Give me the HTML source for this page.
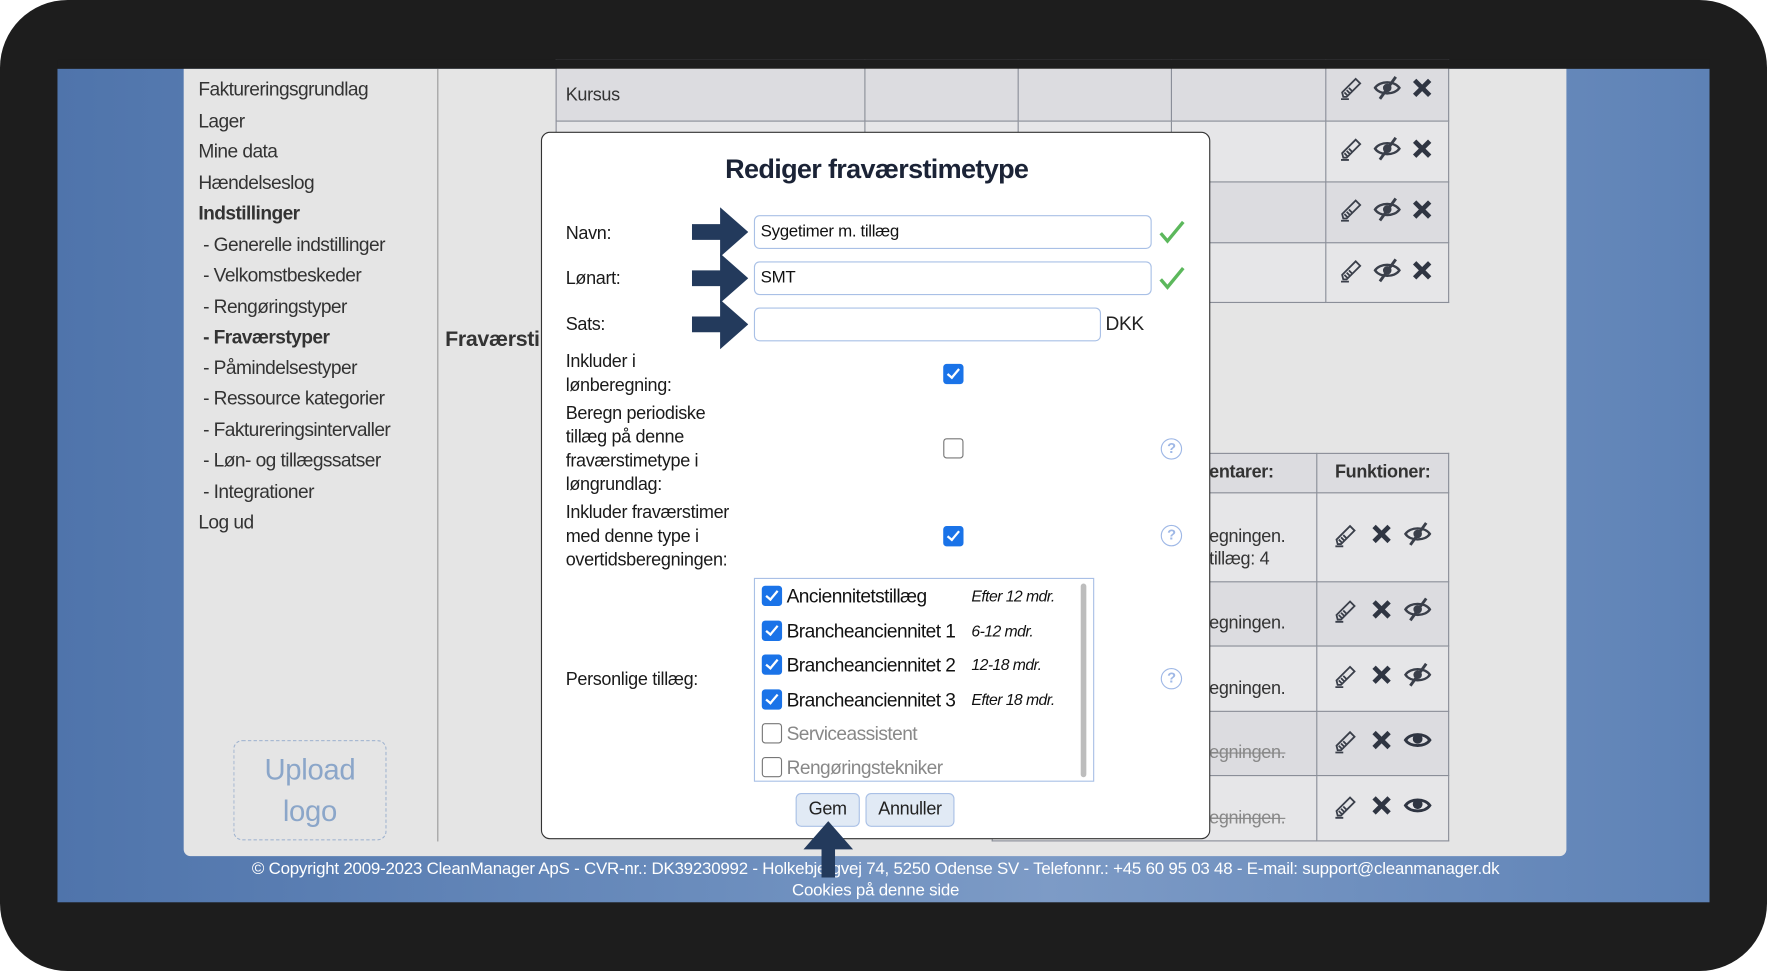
<!DOCTYPE html>
<html><head><meta charset="utf-8"><style>
*{margin:0;padding:0;box-sizing:border-box}
html,body{width:1767px;height:971px;overflow:hidden;background:#fff}
#w{position:absolute;left:0;top:0;width:1568px;height:862px;transform:scale(1.12691,1.12645);transform-origin:0 0;font-family:"Liberation Sans",sans-serif;color:#222;letter-spacing:-0.3px}
.a{position:absolute}
#frame{left:0;top:0;width:1568px;height:862px;background:#1d1d1d;border-radius:60px}
#bg{left:51px;top:61px;width:1466px;height:740px;background:linear-gradient(90deg,#4f74ab 0%,#6b8dbd 40%,#7d9bc6 60%,#5e82b6 100%)}
#cont{left:163px;top:61px;width:1227px;height:699px;background:#e5e5e5;border-radius:0 0 6px 6px}
#side{left:388px;top:61px;width:1px;height:686px;background:#9a9a9a}
.si{position:absolute;left:176px;font-size:17px;color:#333;letter-spacing:-0.5px}
.t td{border:1px solid #8a8e98;font-size:16px;color:#333;padding-left:8px}
table{border-collapse:collapse;position:absolute}
#modal{left:480px;top:117px;width:594px;height:628px;background:#fff;border:1.5px solid #333;border-radius:8px}
.lbl{position:absolute;left:21px;font-size:16px;line-height:21px;color:#1a1a1a}
.inp{position:absolute;left:188px;height:30px;border:1.5px solid #a9c0e6;border-radius:5px;font-size:15px;padding:5px 5px;color:#111}
.cb{position:absolute;width:18px;height:18px;border-radius:3px;background:#1a73e8}
.cb:after{content:"";position:absolute;left:6px;top:2px;width:4px;height:9px;border:solid #fff;border-width:0 2.5px 2.5px 0;transform:rotate(40deg)}
.cbo{position:absolute;width:18px;height:18px;border-radius:3px;border:1.5px solid #777;background:#fff}
.q{position:absolute;left:549px;width:19px;height:19px;border:1.5px solid #9fb8e6;border-radius:50%;color:#9fb8e6;font-size:13px;text-align:center;line-height:16px;font-weight:bold}
.li{position:absolute;left:6px;font-size:17px;color:#111;letter-spacing:-0.5px}
.li i{position:absolute;left:186px;top:1px;font-size:14px;white-space:nowrap}
.btn{position:absolute;top:586px;height:30px;border:1.5px solid #a9c0e6;border-radius:5px;background:#e1eaf5;font-size:16px;text-align:center;line-height:27px}
.ic{position:absolute}
</style></head><body><div id="w">
<svg width="0" height="0" style="position:absolute"><defs>
<symbol id="pen" viewBox="0 0 24 24"><path d="M3 21h7M5 19l-1-4L16 3l4 4L8 19z M6 15l3 3 M8 13l3 3 M10 11l3 3" fill="none" stroke="#3a3f4a" stroke-width="1.6"/></symbol>
<symbol id="x" viewBox="0 0 24 24"><path d="M4 4L20 20M20 4L4 20" stroke="#2f3542" stroke-width="5"/></symbol>
<symbol id="es" viewBox="0 0 24 24"><path d="M2 12c4-6 16-6 20 0c-4 6-16 6-20 0z" fill="none" stroke="#3a3f4a" stroke-width="2"/><circle cx="12" cy="12" r="3.5" fill="#3a3f4a"/><path d="M6 21L19 3" stroke="#3a3f4a" stroke-width="2.4"/></symbol>
<symbol id="eye" viewBox="0 0 24 24"><path d="M2 12c4-6 16-6 20 0c-4 6-16 6-20 0z" fill="none" stroke="#2f3542" stroke-width="2.4"/><circle cx="12" cy="11" r="4" fill="#2f3542"/></symbol>
</defs></svg>
<div class="a" id="frame"></div>
<div class="a" id="bg"></div>
<div class="a" id="cont"></div>
<div class="a" id="side"></div>
<div class="si" style="top:70px">Faktureringsgrundlag</div>
<div class="si" style="top:98px">Lager</div>
<div class="si" style="top:125px">Mine data</div>
<div class="si" style="top:153px">Hændelseslog</div>
<div class="si" style="top:180px;font-weight:bold">Indstillinger</div>
<div class="si" style="top:208px">&nbsp;- Generelle indstillinger</div>
<div class="si" style="top:235px">&nbsp;- Velkomstbeskeder</div>
<div class="si" style="top:263px">&nbsp;- Rengøringstyper</div>
<div class="si" style="top:290px;font-weight:bold">&nbsp;- Fraværstyper</div>
<div class="si" style="top:317px">&nbsp;- Påmindelsestyper</div>
<div class="si" style="top:344px">&nbsp;- Ressource kategorier</div>
<div class="si" style="top:372px">&nbsp;- Faktureringsintervaller</div>
<div class="si" style="top:399px">&nbsp;- Løn- og tillægssatser</div>
<div class="si" style="top:427px">&nbsp;- Integrationer</div>
<div class="si" style="top:454px">Log ud</div>
<div class="a" style="left:207px;top:657px;width:136px;height:89px;border:1px dashed #9fb3cf;border-radius:8px;color:#8ba6c9;font-size:26px;text-align:center;line-height:37px;padding-top:7px">Upload<br>logo</div>
<div class="a" style="left:395px;top:291px;font-size:19px;font-weight:bold;color:#333">Fraværstimetyper</div>

<table class="t" style="left:493px;top:53px;width:793px">
<tr style="height:54px;background:#dcdce0"><td style="width:274px;padding-top:8px">Kursus</td><td style="width:136px"></td><td style="width:137px"></td><td style="width:137px"></td><td style="width:109px"></td></tr>
<tr style="height:54px;background:#e6e6e8"><td></td><td></td><td></td><td></td><td></td></tr>
<tr style="height:54px;background:#dcdce0"><td></td><td></td><td></td><td></td><td></td></tr>
<tr style="height:53px;background:#e6e6e8"><td></td><td></td><td></td><td></td><td></td></tr>
</table>
<div class="a" style="left:51px;top:53px;width:1466px;height:8px;background:#1d1d1d"></div>

<table class="t" style="left:880px;top:402px;width:406px">
<tr style="height:35px;background:#dcdce0"><td style="width:288px;font-weight:bold;padding-left:192px">entarer:</td><td style="font-weight:bold;text-align:center;padding:0">Funktioner:</td></tr>
<tr style="height:79px;background:#e6e6e8"><td style="padding-left:192px;padding-top:20px;line-height:20px">egningen.<br>tillæg: 4</td><td></td></tr>
<tr style="height:57px;background:#dcdce0"><td style="padding-left:192px;padding-top:18px">egningen.</td><td></td></tr>
<tr style="height:58px;background:#e6e6e8"><td style="padding-left:192px;padding-top:18px">egningen.</td><td></td></tr>
<tr style="height:57px;background:#dcdce0"><td style="padding-left:192px;padding-top:18px;color:#888;text-decoration:line-through">egningen.</td><td></td></tr>
<tr style="height:58px;background:#e6e6e8"><td style="padding-left:192px;padding-top:18px;color:#888;text-decoration:line-through">egningen.</td><td></td></tr>
</table>

<svg class="ic" style="left:1187px;top:67px" width="24" height="24"><use href="#pen"/></svg><svg class="ic" style="left:1218px;top:65px" width="26" height="26"><use href="#es"/></svg><svg class="ic" style="left:1252px;top:68px" width="20" height="20"><use href="#x"/></svg>
<svg class="ic" style="left:1187px;top:121px" width="24" height="24"><use href="#pen"/></svg><svg class="ic" style="left:1218px;top:119px" width="26" height="26"><use href="#es"/></svg><svg class="ic" style="left:1252px;top:122px" width="20" height="20"><use href="#x"/></svg>
<svg class="ic" style="left:1187px;top:175px" width="24" height="24"><use href="#pen"/></svg><svg class="ic" style="left:1218px;top:173px" width="26" height="26"><use href="#es"/></svg><svg class="ic" style="left:1252px;top:176px" width="20" height="20"><use href="#x"/></svg>
<svg class="ic" style="left:1187px;top:229px" width="24" height="24"><use href="#pen"/></svg><svg class="ic" style="left:1218px;top:227px" width="26" height="26"><use href="#es"/></svg><svg class="ic" style="left:1252px;top:230px" width="20" height="20"><use href="#x"/></svg>
<svg class="ic" style="left:1182px;top:464px" width="24" height="24"><use href="#pen"/></svg><svg class="ic" style="left:1216px;top:464px" width="20" height="20"><use href="#x"/></svg><svg class="ic" style="left:1245px;top:461px" width="26" height="26"><use href="#es"/></svg>
<svg class="ic" style="left:1182px;top:531px" width="24" height="24"><use href="#pen"/></svg><svg class="ic" style="left:1216px;top:531px" width="20" height="20"><use href="#x"/></svg><svg class="ic" style="left:1245px;top:528px" width="26" height="26"><use href="#es"/></svg>
<svg class="ic" style="left:1182px;top:589px" width="24" height="24"><use href="#pen"/></svg><svg class="ic" style="left:1216px;top:589px" width="20" height="20"><use href="#x"/></svg><svg class="ic" style="left:1245px;top:586px" width="26" height="26"><use href="#es"/></svg>
<svg class="ic" style="left:1182px;top:647px" width="24" height="24"><use href="#pen"/></svg><svg class="ic" style="left:1216px;top:647px" width="20" height="20"><use href="#x"/></svg><svg class="ic" style="left:1245px;top:644px" width="26" height="26"><use href="#eye"/></svg>
<svg class="ic" style="left:1182px;top:705px" width="24" height="24"><use href="#pen"/></svg><svg class="ic" style="left:1216px;top:705px" width="20" height="20"><use href="#x"/></svg><svg class="ic" style="left:1245px;top:702px" width="26" height="26"><use href="#eye"/></svg>

<div class="a" style="left:0;top:762px;width:1554px;text-align:center;color:#fff;font-size:15px;letter-spacing:-0.2px;line-height:19px">© Copyright 2009-2023 CleanManager ApS - CVR-nr.: DK39230992 - Holkebjergvej 74, 5250 Odense SV - Telefonnr.: +45 60 95 03 48 - E-mail: support@cleanmanager.dk<br>Cookies på denne side</div>

<div class="a" id="modal">
<div class="a" style="left:0;top:19px;width:594px;text-align:center;font-size:24px;font-weight:bold;color:#1b2336;letter-spacing:-0.6px">Rediger fraværstimetype</div>
<div class="lbl" style="top:79px">Navn:</div>
<div class="lbl" style="top:119px">Lønart:</div>
<div class="lbl" style="top:160px">Sats:</div>
<div class="inp" style="top:73px;width:353px">Sygetimer m. tillæg</div>
<div class="inp" style="top:114px;width:353px">SMT</div>
<div class="inp" style="top:155px;width:308px"></div>
<div class="a" style="left:500px;top:160px;font-size:17px">DKK</div>
<svg class="a" style="left:547px;top:76px" width="24" height="24" viewBox="0 0 24 24"><path d="M2 13l6 7L22 3" fill="none" stroke="#5cb85c" stroke-width="3"/></svg>
<svg class="a" style="left:547px;top:117px" width="24" height="24" viewBox="0 0 24 24"><path d="M2 13l6 7L22 3" fill="none" stroke="#5cb85c" stroke-width="3"/></svg>
<div class="lbl" style="top:193px">Inkluder i<br>lønberegning:</div>
<div class="cb" style="left:356px;top:205px"></div>
<div class="lbl" style="top:239px">Beregn periodiske<br>tillæg på denne<br>fraværstimetype i<br>løngrundlag:</div>
<div class="cbo" style="left:356px;top:271px"></div>
<div class="q" style="top:271px">?</div>
<div class="lbl" style="top:327px">Inkluder fraværstimer<br>med denne type i<br>overtidsberegningen:</div>
<div class="cb" style="left:356px;top:349px"></div>
<div class="q" style="top:348px">?</div>
<div class="lbl" style="top:475px">Personlige tillæg:</div>
<div class="q" style="top:475px">?</div>
<div class="a" style="left:188px;top:395px;width:302px;height:181px;border:1.5px solid #a9c0e6">
 <div class="a" style="left:289px;top:4px;width:5px;height:172px;background:#bdbdbd;border-radius:3px"></div>
 <div class="cb" style="left:6px;top:6px"></div><div class="li" style="left:28px;top:6px">Anciennitetstillæg<i style="left:164px">Efter 12 mdr.</i></div>
 <div class="cb" style="left:6px;top:37px"></div><div class="li" style="left:28px;top:37px">Brancheanciennitet 1<i style="left:164px">6-12 mdr.</i></div>
 <div class="cb" style="left:6px;top:67px"></div><div class="li" style="left:28px;top:67px">Brancheanciennitet 2<i style="left:164px">12-18 mdr.</i></div>
 <div class="cb" style="left:6px;top:98px"></div><div class="li" style="left:28px;top:98px">Brancheanciennitet 3<i style="left:164px">Efter 18 mdr.</i></div>
 <div class="cbo" style="left:6px;top:128px"></div><div class="li" style="left:28px;top:128px;color:#888">Serviceassistent</div>
 <div class="cbo" style="left:6px;top:158px"></div><div class="li" style="left:28px;top:158px;color:#888">Rengøringstekniker</div>
</div>
<div class="btn" style="left:225px;width:57px">Gem</div>
<div class="btn" style="left:287px;width:79px">Annuller</div>
</div>

<svg class="a" style="left:614px;top:184px" width="50" height="44" viewBox="0 0 50 44"><path d="M0 15h25V0l25 22-25 22V29H0z" fill="#233a5c"/></svg>
<svg class="a" style="left:614px;top:225px" width="50" height="44" viewBox="0 0 50 44"><path d="M0 15h25V0l25 22-25 22V29H0z" fill="#233a5c"/></svg>
<svg class="a" style="left:614px;top:266px" width="50" height="44" viewBox="0 0 50 44"><path d="M0 15h25V0l25 22-25 22V29H0z" fill="#233a5c"/></svg>
<svg class="a" style="left:713px;top:729px" width="44" height="50" viewBox="0 0 44 50"><path d="M16 50V25H0L22 0l22 25H28v25z" fill="#233a5c"/></svg>
</div></body></html>
